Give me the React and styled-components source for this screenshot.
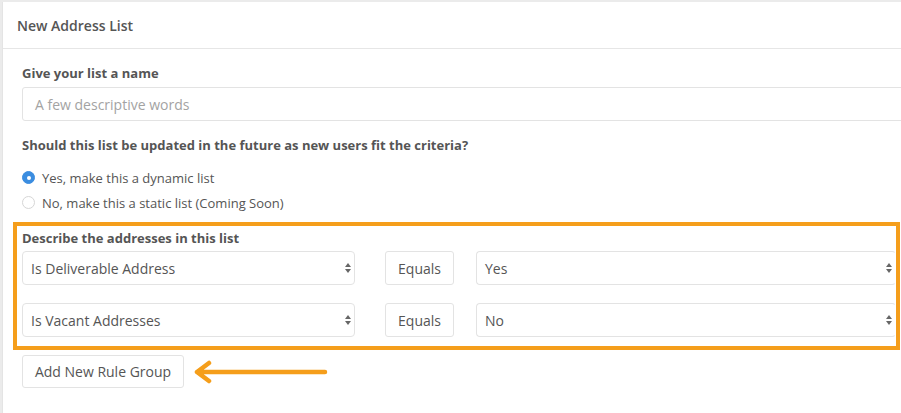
import React from "react";
import styled, { createGlobalStyle } from "styled-components";

const Global = createGlobalStyle`
  html, body { margin: 0; padding: 0; overflow: hidden; }
  body {
    background: #ebebeb;
    font-family: "Open Sans", "Liberation Sans", sans-serif;
    color: #555;
  }
`;

const Panel = styled.div`
  margin: 2px 0 0 2px;
  width: 960px;
  height: 420px;
  background: #fff;
  border-left: 1px solid #e4e4e4;
`;

const Header = styled.div`
  height: 46px;
  display: flex;
  align-items: center;
  padding-left: 14px;
  border-bottom: 1px solid #e6e6e6;
  font-size: 14px;
  font-weight: 600;
  color: #555;
`;

const Body = styled.div`
  padding: 15px 20px 0 19px;
  display: flex;
  flex-direction: column;
`;

const Label = styled.div`
  font-size: 13px;
  font-weight: 700;
  line-height: 18px;
  color: #555;
`;

const TextInput = styled.div`
  margin-top: 5px;
  height: 32px;
  border: 1px solid #e3e3e3;
  border-radius: 3px;
  display: flex;
  align-items: center;
  padding-left: 12px;
  font-size: 14px;
  color: #a3a3a3;
`;

const Question = styled(Label)`
  margin-top: 15px;
`;

const RadioList = styled.div`
  margin-top: 11px;
  display: flex;
  flex-direction: column;
`;

const RadioRow = styled.label`
  display: flex;
  align-items: center;
  height: 25px;
  font-size: 13px;
  color: #555;
`;

const RadioDot = styled.span`
  width: 13px;
  height: 13px;
  border-radius: 50%;
  box-sizing: border-box;
  margin: 0 7px 0 0;
  flex: none;
  display: flex;
  align-items: center;
  justify-content: center;
  border: 1px solid ${(p) => (p.$checked ? "#3b8de0" : "#d6d6d6")};
  background: ${(p) => (p.$checked ? "#3b8de0" : "#fff")};
  &::after {
    content: "";
    width: 4px;
    height: 4px;
    border-radius: 50%;
    background: ${(p) => (p.$checked ? "#fff" : "transparent")};
  }
`;

const RuleBox = styled.div`
  margin: 7px 0 0 -9px;
  width: 874px;
  border: 4px solid #f59e1b;
  padding: 3px 0 9px 5px;
  display: flex;
  flex-direction: column;
`;

const RuleRows = styled.div`
  margin-top: 4px;
  display: flex;
  flex-direction: column;
  gap: 18px;
`;

const RuleRow = styled.div`
  display: flex;
  align-items: center;
`;

const Select = styled.div`
  box-sizing: border-box;
  height: 34px;
  width: ${(p) => p.$width || "auto"};
  flex: ${(p) => (p.$grow ? "1" : "none")};
  border: 1px solid #e3e3e3;
  border-right-color: ${(p) => (p.$grow ? "transparent" : "#e3e3e3")};
  border-radius: 4px;
  display: flex;
  align-items: center;
  justify-content: space-between;
  padding: 0 2px 0 8px;
  font-size: 14px;
  color: #555;
`;

const Operator = styled.div`
  box-sizing: border-box;
  height: 34px;
  width: 69px;
  margin: 0 22px 0 30px;
  border: 1px solid #e3e3e3;
  border-radius: 3px;
  display: flex;
  align-items: center;
  justify-content: center;
  font-size: 14px;
  color: #555;
`;

const Footer = styled.div`
  margin-top: 5px;
  display: flex;
  align-items: center;
`;

const Button = styled.button`
  box-sizing: border-box;
  height: 33px;
  width: 162px;
  border: 1px solid #e3e3e3;
  border-radius: 3px;
  background: #fff;
  font-family: "Open Sans", "Liberation Sans", sans-serif;
  font-size: 14px;
  color: #555;
  padding: 0;
`;

const Arrow = styled.svg`
  margin-left: 9px;
  flex: none;
`;

const Carets = () => (
  <svg width="8" height="12" viewBox="0 0 8 12">
    <path d="M4 1 L7 5 L1 5 Z" fill="#666" />
    <path d="M4 11 L7 7 L1 7 Z" fill="#666" />
  </svg>
);

const rules = [
  { field: "Is Deliverable Address", op: "Equals", value: "Yes" },
  { field: "Is Vacant Addresses", op: "Equals", value: "No" },
];

export default function App() {
  return (
    <>
      <Global />
      <Panel>
        <Header>New Address List</Header>
        <Body>
          <Label>Give your list a name</Label>
          <TextInput>A few descriptive words</TextInput>
          <Question>Should this list be updated in the future as new users fit the criteria?</Question>
          <RadioList>
            <RadioRow>
              <RadioDot $checked />
              Yes, make this a dynamic list
            </RadioRow>
            <RadioRow>
              <RadioDot />
              No, make this a static list (Coming Soon)
            </RadioRow>
          </RadioList>
          <RuleBox>
            <Label>Describe the addresses in this list</Label>
            <RuleRows>
              {rules.map((r) => (
                <RuleRow key={r.field}>
                  <Select $width="333px">
                    {r.field}
                    <Carets />
                  </Select>
                  <Operator>{r.op}</Operator>
                  <Select $grow>
                    {r.value}
                    <Carets />
                  </Select>
                </RuleRow>
              ))}
            </RuleRows>
          </RuleBox>
          <Footer>
            <Button>Add New Rule Group</Button>
            <Arrow width="136" height="24" viewBox="0 0 136 24">
              <path
                d="M4 12 H132 M16 3 L4 12 L16 21"
                stroke="#f59e1b"
                strokeWidth="4.5"
                strokeLinecap="round"
                strokeLinejoin="round"
                fill="none"
              />
            </Arrow>
          </Footer>
        </Body>
      </Panel>
    </>
  );
}
